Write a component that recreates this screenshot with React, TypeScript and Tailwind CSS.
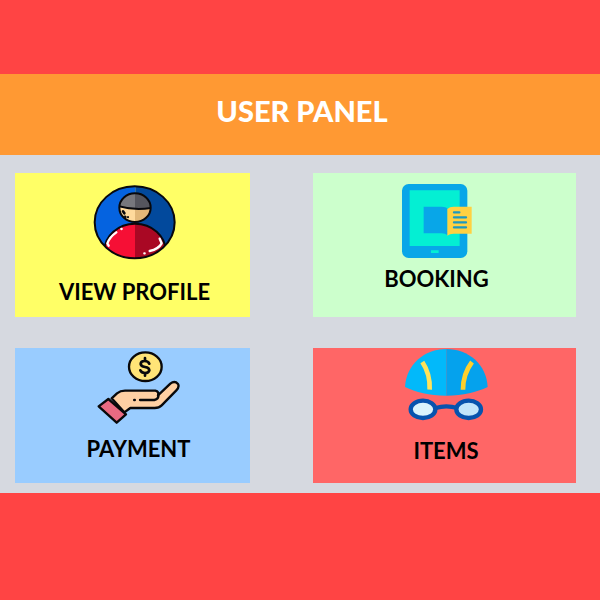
import type { ReactNode } from "react";

function ProfileIcon() {
  return (
    <svg className="h-[75px] w-[83px]" viewBox="25 20 249 225" aria-hidden="true">
      <defs>
        <clipPath id="profile-disc">
          <ellipse cx="150" cy="132" rx="120" ry="108" />
        </clipPath>
        <clipPath id="profile-head">
          <ellipse cx="151" cy="88" rx="46" ry="42" />
        </clipPath>
      </defs>
      <g clipPath="url(#profile-disc)">
        <path fill="#0563e0" d="M20 15h132v235H20z" />
        <path fill="#02499c" d="M152 15h130v235H152z" />
        <ellipse cx="151" cy="218" rx="92" ry="82" fill="#f60f35" />
        <path fill="#a90824" d="M151 136c51 0 92 37 92 82v32h-92z" />
        <ellipse cx="151" cy="218" rx="92" ry="82" fill="none" stroke="#08080c" strokeWidth="6" />
      </g>
      <g clipPath="url(#profile-head)">
        <path fill="#ffda9c" d="M100 40h51v95h-51z" />
        <path fill="#e2b778" d="M151 40h51v95h-51z" />
        <path fill="#77777d" d="M100 40h51v51q-28 0-51-7z" />
        <path fill="#55555d" d="M151 40h51v48q-23 4-51 3z" />
        <path d="M100 83q46 14 100 6" fill="none" stroke="#08080c" strokeWidth="6" />
      </g>
      <ellipse cx="151" cy="88" rx="47" ry="43" fill="none" stroke="#08080c" strokeWidth="6" />
      <ellipse cx="150" cy="132" rx="120" ry="108" fill="none" stroke="#08080c" strokeWidth="6" />
      <g fill="none" stroke="#08080c" strokeLinecap="round">
        <path d="M115 99l4 6" strokeWidth="8" />
        <path d="M121 114l2 2M130 116v1" strokeWidth="6" />
      </g>
      <g fill="none" stroke="#fff" strokeLinecap="round" strokeLinejoin="round" strokeWidth="7">
        <path d="M95 162q-20 14-27 33l4 7M110 152h1" />
        <path d="M225 181l6 14q-9 17-36 23M179 225h1" />
      </g>
    </svg>
  );
}

function BookingIcon() {
  return (
    <svg className="h-[76px] w-[72px]" viewBox="33 24 216 228" aria-hidden="true">
      <rect x="36" y="27" width="196" height="222" rx="20" fill="#08a6e8" />
      <path fill="#04efd3" d="M59 46h150v167H59zM123 226h23v8h-23z" />
      <path fill="#08a6e8" d="M101 95h54q13 0 18 7v79q-7-6-18-6h-54z" />
      <path fill="#ffd142" d="M172 102q7-7 19-7h54v81h-54q-12 0-19 6z" />
      <path
        d="M192 112h16M192 127h36M192 142h36M192 157h36"
        fill="none"
        stroke="#1d98c0"
        strokeLinecap="round"
        strokeWidth="7"
      />
    </svg>
  );
}

function PaymentIcon() {
  return (
    <svg className="h-[75px] w-[83px]" viewBox="24 24 249 225" aria-hidden="true">
      <g stroke="#09090b" strokeLinecap="round" strokeLinejoin="round" strokeWidth="7">
        <ellipse cx="169" cy="74" rx="49" ry="43" fill="#ffe477" />
        <path
          d="M68 169L84 154Q94 146 108 146H199Q211 149 207 160L244 125Q257 115 267 126Q272 135 262 145L218 190Q210 198 197 198H124L106 211Z"
          fill="#ffd0a3"
        />
        <path d="M153 174H196Q210 171 208 157" fill="none" />
        <path d="M29 193L58 171L111 217L83 242Z" fill="#e96a82" />
        <path d="M136 174h1" fill="none" strokeWidth="8" />
        <path
          d="M181 65Q178 57 167 57Q155 57 155 66Q156 73 168 75Q181 77 181 85Q179 93 168 93Q157 93 154 85M168 48V56M168 94V101"
          fill="none"
          strokeWidth="8"
        />
      </g>
    </svg>
  );
}

function ItemsIcon() {
  return (
    <svg className="h-[73px] w-[84px]" viewBox="27 18 252 219" aria-hidden="true">
      <path fill="#02b9fa" d="M30 135C34 67 88 21 154 21v140C102 161 62 150 30 135z" />
      <path fill="#05a2ed" d="M154 21c67 0 121 47 124 114-34 16-73 26-124 26z" />
      <path d="M82 60q24 36 22 83" fill="none" stroke="#ffe35a" strokeWidth="14" />
      <path d="M231 60q-27 36-27 83" fill="none" stroke="#ffd02c" strokeWidth="14" />
      <path d="M122 198q31-10 66 0" fill="none" stroke="#0753ae" strokeWidth="13" />
      <ellipse cx="84" cy="202" rx="37" ry="26" fill="#daf3fc" stroke="#0753ae" strokeWidth="13" />
      <ellipse cx="221" cy="202" rx="37" ry="26" fill="#c2e5fb" stroke="#0753ae" strokeWidth="13" />
    </svg>
  );
}

type CardProps = { label: string; className: string; labelClass: string; children: ReactNode };

function Card({ label, className, labelClass, children }: CardProps) {
  return (
    <button type="button" className={`flex flex-col items-center ${className}`}>
      {children}
      <span className={`text-[22px] leading-7 font-bold text-black ${labelClass}`}>{label}</span>
    </button>
  );
}

export default function App() {
  return (
    <div className="flex min-h-screen flex-col bg-[#ff4444] pt-[74px] pb-[107px] font-['Lato',sans-serif]">
      <header className="flex h-[81px] items-center justify-center bg-[#ff9933] pb-2 pl-1">
        <h1 className="text-[29px] leading-9 font-black text-white">USER PANEL</h1>
      </header>
      <main className="grid grow grid-cols-[235fr_263fr] grid-rows-[144fr_135fr] gap-x-[63px] gap-y-[31px] bg-[#d6d9e0] pt-[18px] pr-6 pb-[10px] pl-[15px]">
        <Card label="VIEW PROFILE" className="bg-[#ffff66] pt-3 pl-1" labelClass="mt-[18px]">
          <ProfileIcon />
        </Card>
        <Card label="BOOKING" className="bg-[#ccffcc] pt-[10px] pr-4" labelClass="mt-[6px]">
          <BookingIcon />
        </Card>
        <Card label="PAYMENT" className="bg-[#99ccff] pt-[2px] pl-3" labelClass="mt-[10px]">
          <PaymentIcon />
        </Card>
        <Card label="ITEMS" className="bg-[#ff6666] pl-[3px]" labelClass="mt-4">
          <ItemsIcon />
        </Card>
      </main>
    </div>
  );
}
